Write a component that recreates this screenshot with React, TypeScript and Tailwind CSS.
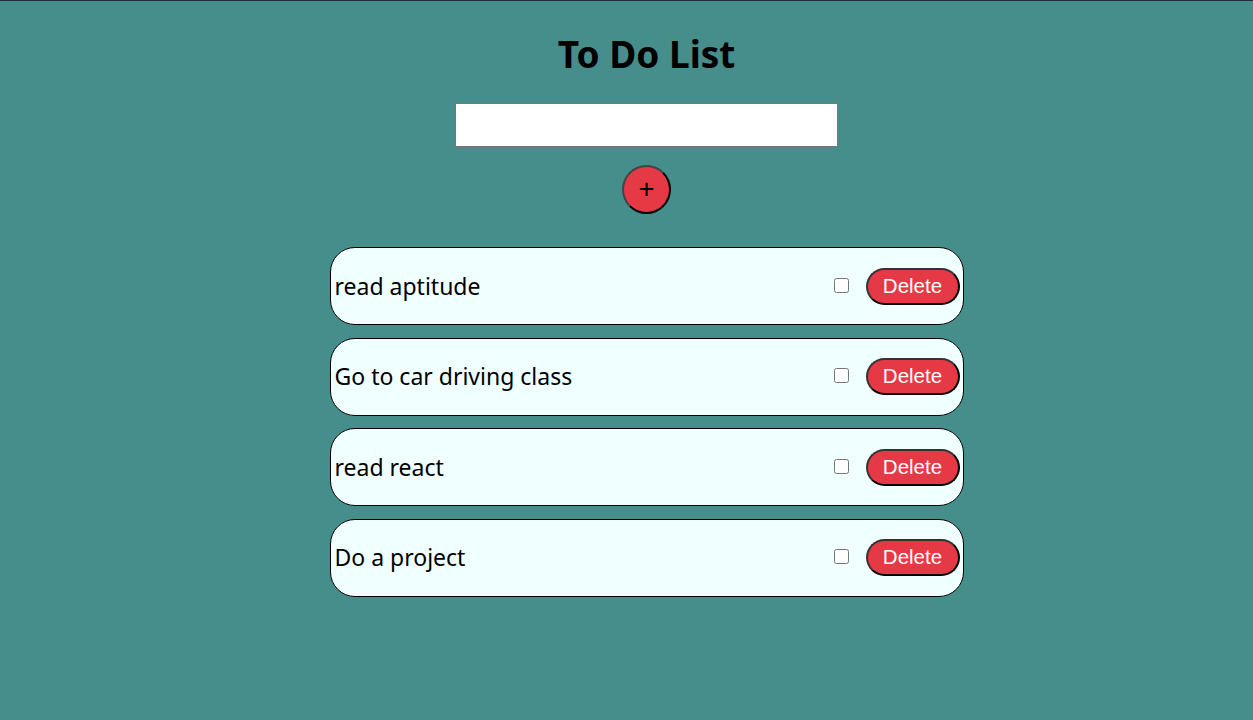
import React from "react";

const items = ["read aptitude", "Go to car driving class", "read react", "Do a project"];

export default function App() {
  return (
    <div
      className="min-h-[720px] w-full bg-[#468e8c] border-t border-[#1f2a3a] flex flex-col items-center pl-[40px]"
      style={{ fontFamily: '"Noto Sans", "DejaVu Sans", sans-serif' }}
    >
      <h1 className="mt-[27px] text-[37px] leading-[52px] font-bold text-black" style={{ fontFamily: '"Noto Sans", sans-serif' }}>
        To Do List
      </h1>
      <input
        type="text"
        className="mt-[23px] w-[383px] h-[44px] bg-white border border-solid border-[#767676] outline-none"
      />
      <button className="mt-[18px] w-[49px] h-[49px] rounded-full bg-[#e63946] border-2 border-[#444] border-b-black border-r-black text-black text-[28px] leading-none flex items-center justify-center pb-[3px]">
        +
      </button>
      <div className="mt-[33px] flex flex-col gap-[12.5px] w-[634px]">
        {items.map((t) => (
          <div
            key={t}
            className="h-[78px] rounded-[25px] border border-black bg-[#f0ffff] flex items-center pl-[4px] pr-[3px]"
          >
            <span className="text-[23px] text-black flex-1">{t}</span>
            <input type="checkbox" className="w-[15px] h-[15px] mr-[17px] mb-[2px]" />
            <button
              className="w-[94px] h-[37px] rounded-full bg-[#e63946] border-2 border-[#333] border-b-black border-r-black text-white text-[20.5px] leading-none"
              style={{ fontFamily: '"Liberation Sans", Arial, sans-serif' }}
            >
              Delete
            </button>
          </div>
        ))}
      </div>
    </div>
  );
}
